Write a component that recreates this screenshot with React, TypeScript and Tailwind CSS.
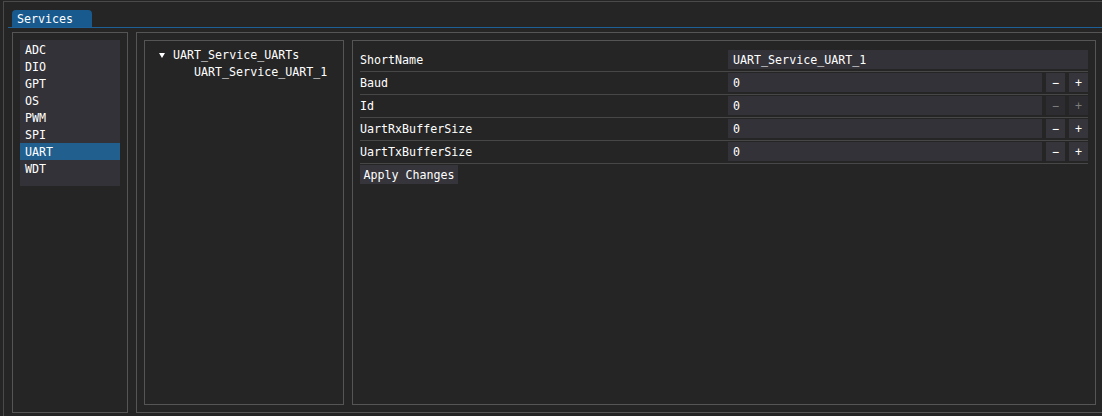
import React from "react";

const items = ["ADC", "DIO", "GPT", "OS", "PWM", "SPI", "UART", "WDT"];

const rows = [
  { label: "ShortName", value: "UART_Service_UART_1", stepper: false, disabled: false },
  { label: "Baud", value: "0", stepper: true, disabled: false },
  { label: "Id", value: "0", stepper: true, disabled: true },
  { label: "UartRxBufferSize", value: "0", stepper: true, disabled: false },
  { label: "UartTxBufferSize", value: "0", stepper: true, disabled: false },
];

function StepButton({ children, disabled }: { children: React.ReactNode; disabled: boolean }) {
  return (
    <div
      className={
        disabled
          ? "w-[19px] h-[19px] pt-[1px] flex items-center justify-center bg-[#2d2d31] text-[#7c7c7c]"
          : "w-[19px] h-[19px] pt-[1px] flex items-center justify-center bg-[#35353b] text-white"
      }
    >
      {children}
    </div>
  );
}

export default function App() {
  return (
    <div className="w-[1102px] h-[416px] overflow-hidden bg-[#252525] text-white text-[11.67px] leading-[13px] font-['DejaVu_Sans_Mono',monospace]">
      <div className="ml-[3px] mt-[1px] w-[1200px] h-[500px] border-t border-l border-[#4a4a4a]">
        {/* tab bar */}
        <div className="ml-[4px] mt-[8px] flex border-b border-[#1d5f97]">
          <div className="ml-[4px] w-[80px] h-[17px] bg-[#185a8e] rounded-t-[4px] pl-[5px] pt-[2px] flex items-center">
            Services
          </div>
        </div>
        {/* content */}
        <div className="ml-[8px] mt-[4px] flex gap-[8px]">
          {/* left box */}
          <div className="w-[116px] h-[381px] border border-[#555555] p-[7px]">
            <div className="w-[100px] h-[146px] bg-[#333238] pt-[1px]">
              {items.map((it) => (
                <div
                  key={it}
                  className={
                    it === "UART"
                      ? "h-[17px] flex items-center pl-[5px] pt-[2px] bg-[#215f8f]"
                      : "h-[17px] flex items-center pl-[5px] pt-[2px]"
                  }
                >
                  {it}
                </div>
              ))}
            </div>
          </div>
          {/* right box */}
          <div className="w-[968px] h-[381px] border border-[#555555] p-[7px] flex gap-[8px]">
            {/* tree */}
            <div className="w-[200px] h-full border border-[#555555] pt-[8px] flex flex-col gap-[4px]">
              <div className="h-[13px] flex items-center pl-[14px] gap-[8px]">
                <svg width="6" height="5" viewBox="0 0 6 5" className="shrink-0 -mt-[1px]">
                  <polygon points="0,0 6,0 3,5" fill="#ffffff" />
                </svg>
                <span>UART_Service_UARTs</span>
              </div>
              <div className="h-[13px] flex items-center pl-[49px]">UART_Service_UART_1</div>
            </div>
            {/* props */}
            <div className="flex-1 h-full border border-[#555555] pt-[9px] px-[7px]">
              {rows.map((r) => (
                <div key={r.label} className="h-[22px] mb-[1px] flex items-start border-b border-[#474747]">
                  <div className="flex-1 h-[19px] pt-[2px] flex items-center">{r.label}</div>
                  <div className="w-[360px] h-[19px] flex gap-[4px]">
                    <div className="flex-1 h-[19px] bg-[#333238] pl-[5px] pt-[2px] flex items-center">{r.value}</div>
                    {r.stepper && (
                      <>
                        <StepButton disabled={r.disabled}>−</StepButton>
                        <StepButton disabled={r.disabled}>+</StepButton>
                      </>
                    )}
                  </div>
                </div>
              ))}
              <div className="mt-[1px] w-[98px] h-[19px] pt-[2px] bg-[#35353b] flex items-center justify-center">
                Apply Changes
              </div>
            </div>
          </div>
        </div>
      </div>
    </div>
  );
}
